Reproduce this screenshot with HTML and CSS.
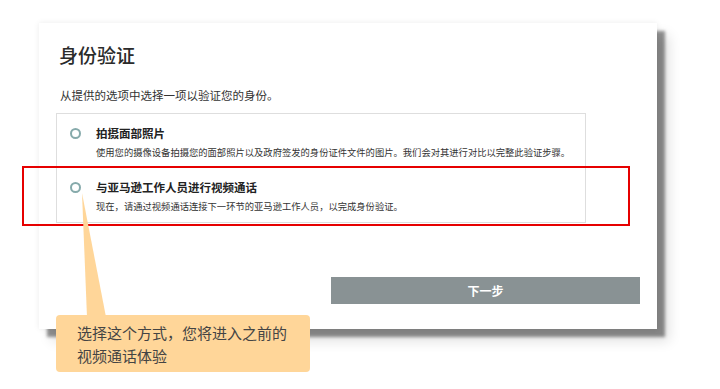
FILE: index.html
```html
<!DOCTYPE html>
<html lang="zh-CN">
<head>
    <meta charset="utf-8">
    <meta name="viewport" content="width=device-width, initial-scale=1.0">
    <title>身份验证</title>
    <link rel="stylesheet" href="styles.css">
</head>
<body>
    <div class="stage">
        <div class="card">
            <h1 class="card-title">身份验证</h1>
            <p class="card-lead">从提供的选项中选择一项以验证您的身份。</p>

            <div class="options">
                <label class="option">
                    <span class="radio"></span>
                    <span class="option-text">
                        <span class="option-title">拍摄面部照片</span>
                        <span class="option-desc">使用您的摄像设备拍摄您的面部照片以及政府签发的身份证件文件的图片。我们会对其进行对比以完整此验证步骤。</span>
                    </span>
                </label>
                <label class="option">
                    <span class="radio"></span>
                    <span class="option-text">
                        <span class="option-title">与亚马逊工作人员进行视频通话</span>
                        <span class="option-desc">现在，请通过视频通话连接下一环节的亚马逊工作人员，以完成身份验证。</span>
                    </span>
                </label>
            </div>

            <button class="next-btn">下一步</button>
        </div>

        <!-- annotation layer -->
        <div class="highlight"></div>
        <svg class="pointer" width="720" height="389" viewBox="0 0 720 389">
            <polygon points="82,193 87,317 106,317" fill="#ffd699" />
        </svg>
        <div class="callout">选择这个方式，您将进入之前的<br>视频通话体验</div>
    </div>
</body>
</html>
```

FILE: styles.css
```css
* {
    margin: 0;
    padding: 0;
    box-sizing: border-box;
}

body {
    background: #fff;
    font-family: "Noto Sans CJK SC", "Noto Sans", sans-serif;
    color: #333;
}

.stage {
    position: relative;
    width: 720px;
    height: 389px;
    overflow: hidden;
    padding-top: 23px;
    padding-left: 39px;
}

.card {
    width: 618px;
    height: 306px;
    background: #fff;
    padding: 20px 17px 0 17px;
    box-shadow: 8px 8px 3px rgba(0, 0, 0, 0.42),
        12px 12px 12px rgba(0, 0, 0, 0.12),
        0 0 6px rgba(0, 0, 0, 0.08);
}

.card-title {
    font-size: 19px;
    line-height: 24px;
    font-weight: 500;
    margin-left: 3px;
    color: #2b2b2b;
}

.card-lead {
    font-size: 11.5px;
    line-height: 16px;
    margin: 20px 0 0 4px;
    color: #333;
}

.options {
    width: 530px;
    margin-top: 10px;
    border: 1px solid #dedede;
}

.option {
    display: flex;
    align-items: flex-start;
    gap: 15px;
    padding: 11px 13px 8px 13px;
}

.radio {
    flex: none;
    width: 11px;
    height: 11px;
    margin-top: 3px;
    border: 2px solid #86aaab;
    border-radius: 50%;
    background: #fff;
}

.option-text {
    display: flex;
    flex-direction: column;
    gap: 3px;
}

.option-title {
    font-size: 11.5px;
    line-height: 16px;
    font-weight: bold;
    color: #222;
}

.option-desc {
    font-size: 9.3px;
    line-height: 16px;
    color: #333;
}

.next-btn {
    display: block;
    width: 309px;
    height: 27px;
    margin: 54px 0 0 auto;
    border: none;
    background: #899294;
    color: #fff;
    font-family: inherit;
    font-size: 12px;
    font-weight: bold;
}

.highlight {
    position: absolute;
    left: 22px;
    top: 166px;
    width: 608px;
    height: 60px;
    border: 2px solid #e60000;
}

.pointer {
    position: absolute;
    left: 0;
    top: 0;
}

.callout {
    position: absolute;
    left: 56px;
    top: 315px;
    width: 254px;
    height: 57px;
    padding: 6px 0 0 21px;
    background: #ffd699;
    border-radius: 4px;
    font-size: 15px;
    line-height: 23px;
    color: #444;
}
```
